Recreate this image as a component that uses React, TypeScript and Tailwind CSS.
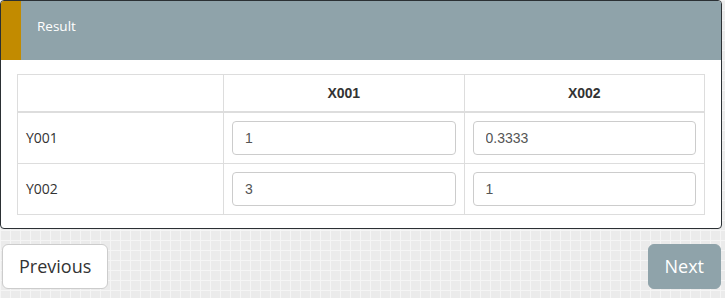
const ROWS = [
  { label: "Y001", values: ["1", "0.3333"] },
  { label: "Y002", values: ["3", "1"] },
];

const COLUMNS = ["X001", "X002"];

export default function App() {
  return (
    <div className="h-[298px] w-[725px] overflow-hidden bg-[#ebebeb] bg-[linear-gradient(to_right,#f5f5f5_1px,transparent_1px),linear-gradient(to_bottom,#f5f5f5_1px,transparent_1px)] bg-[size:10px_10px] font-['Open_Sans',sans-serif]">
      <div className="w-[722px] overflow-hidden rounded-[4px] border border-[#2b3034] bg-white">
        <div className="flex h-[59px] bg-[#8fa3aa]">
          <div className="w-[20px] bg-[#c28b00]" />
          <div className="pl-[16px] pt-[15px] text-[13.5px] leading-[20px] text-white">
            Result
          </div>
        </div>
        <div className="px-[16px] pb-[13px] pt-[14px]">
          <table className="w-full border-collapse border border-[#dddddd] text-[14px] text-[#333333]">
            <thead>
              <tr>
                <th className="w-[30%] border border-b-2 border-[#dddddd] p-2" />
                {COLUMNS.map((col) => (
                  <th
                    key={col}
                    className="w-[35%] border border-b-2 border-[#dddddd] p-2 text-center font-['Liberation_Sans',sans-serif] text-[14px] font-bold leading-[20px] text-[#333333]"
                  >
                    {col}
                  </th>
                ))}
              </tr>
            </thead>
            <tbody>
              {ROWS.map((row) => (
                <tr key={row.label}>
                  <td className="border border-[#dddddd] p-2 text-[14px] leading-[20px]">
                    {row.label}
                  </td>
                  {row.values.map((value, index) => (
                    <td key={index} className="border border-[#dddddd] p-2">
                      <input
                        readOnly
                        value={value}
                        className="block h-[34px] w-full rounded-[4px] border border-[#cccccc] bg-white px-3 font-['Liberation_Sans',sans-serif] text-[14px] text-[#555555] outline-none"
                      />
                    </td>
                  ))}
                </tr>
              ))}
            </tbody>
          </table>
        </div>
      </div>
      <div className="mt-[15px] flex justify-between pl-[2px] pr-[4px]">
        <button className="h-[45px] rounded-[6px] border border-[#cccccc] bg-white px-[16px] text-[18px] text-[#333333]">
          Previous
        </button>
        <button className="h-[45px] rounded-[6px] border border-[#8fa3aa] bg-[#8fa3aa] px-[16px] text-[18px] text-white">
          Next
        </button>
      </div>
    </div>
  );
}
